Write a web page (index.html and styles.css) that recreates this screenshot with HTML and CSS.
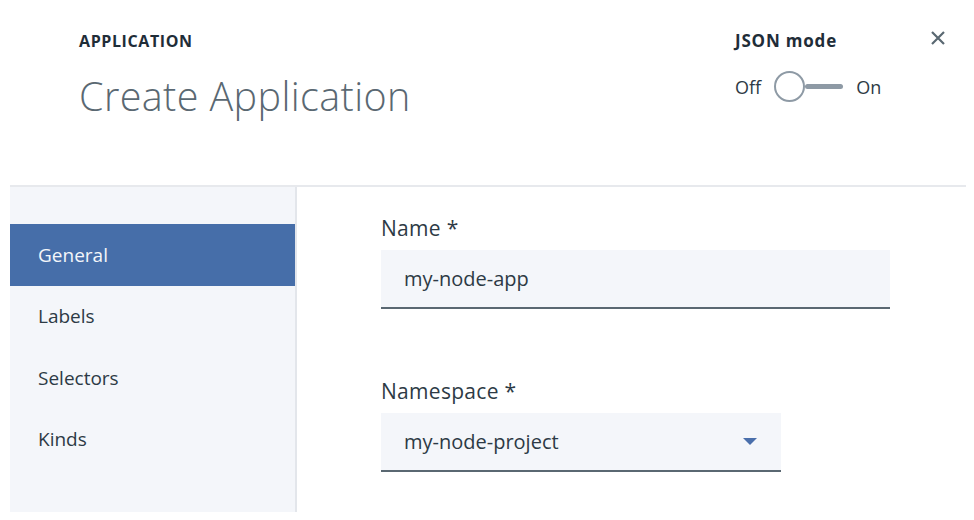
FILE: index.html
```html
<!DOCTYPE html>
<html lang="en">
<head>
<meta charset="utf-8">
<title>Create Application</title>
<link rel="stylesheet" href="styles.css">
</head>
<body>
<div class="modal">
  <header class="header">
    <div class="titles">
      <div class="eyebrow">APPLICATION</div>
      <h1 class="title">Create Application</h1>
    </div>
    <div class="json">
      <div class="json-label">JSON mode</div>
      <div class="toggle-row">
        <span class="toggle-text">Off</span>
        <span class="toggle">
          <span class="toggle-knob"></span>
          <span class="toggle-track"></span>
        </span>
        <span class="toggle-text">On</span>
      </div>
    </div>
    <button class="close" aria-label="Close">
      <svg width="16" height="16" viewBox="0 0 16 16"><path d="M2 2 L14 14 M14 2 L2 14" stroke="#5a6872" stroke-width="2.2" fill="none"/></svg>
    </button>
  </header>
  <section class="body">
    <nav class="sidebar">
      <a class="nav-item active">General</a>
      <a class="nav-item">Labels</a>
      <a class="nav-item">Selectors</a>
      <a class="nav-item">Kinds</a>
    </nav>
    <div class="form">
      <div class="field">
        <label class="field-label">Name *</label>
        <div class="input wide">my-node-app</div>
      </div>
      <div class="field">
        <label class="field-label">Namespace *</label>
        <div class="input select">
          <span>my-node-project</span>
          <svg class="caret" width="14" height="8" viewBox="0 0 14 8"><path d="M0 0 H14 L7 7 Z" fill="#4a6fab"/></svg>
        </div>
      </div>
    </div>
  </section>
</div>
</body>
</html>
```

FILE: styles.css
```css
* { box-sizing: border-box; }
html, body { margin: 0; padding: 0; background: #ffffff; }
body {
  font-family: "Open Sans", "Liberation Sans", sans-serif;
  color: #2d3a45;
  width: 974px;
  height: 520px;
  overflow: hidden;
}
.modal { display: flex; flex-direction: column; }

.header {
  display: flex;
  align-items: flex-start;
  height: 185px;
  padding: 30px 0 0 79px;
}
.titles { flex: 1; }
.eyebrow {
  font-size: 16px;
  font-weight: 700;
  line-height: 22px;
  letter-spacing: 0.6px;
  color: #1f2d38;
}
.title {
  margin: 19px 0 0;
  font-size: 39.5px;
  font-weight: 300;
  line-height: 50px;
  color: #5a6872;
  letter-spacing: 0.4px;
}
.json { width: 195px; }
.json-label {
  font-size: 17px;
  font-weight: 700;
  line-height: 22px;
  letter-spacing: 0.8px;
  color: #1f2d38;
}
.toggle-row {
  display: flex;
  align-items: center;
  gap: 13px;
  margin-top: 19px;
}
.toggle-text { font-size: 18px; color: #2d3a45; line-height: 24px; }
.toggle { display: flex; align-items: center; }
.toggle-knob {
  width: 31px; height: 31px;
  border: 2.5px solid #8e9aa5;
  border-radius: 50%;
  background: #fff;
}
.toggle-track {
  width: 38px; height: 5px;
  background: #8e9aa5;
  border-radius: 3px;
}
.close {
  margin: 0 28px 0 0;
  padding: 0;
  border: 0;
  background: none;
  width: 16px; height: 16px;
  display: flex;
}

.body {
  display: flex;
  margin-left: 10px;
  width: 956px;
  border-top: 2px solid #e7e9ed;
  height: 327px;
}
.sidebar {
  width: 287px;
  background: #f4f6fa;
  border-right: 2px solid #e3e6eb;
  padding-top: 37px;
  display: flex;
  flex-direction: column;
}
.nav-item {
  display: flex;
  align-items: center;
  height: 61.5px;
  padding-left: 28px;
  font-size: 19px;
  color: #2d3a45;
}
.nav-item.active { background: #466ea9; color: #f4f6fa; }

.form {
  flex: 1;
  padding: 27px 0 0 84px;
  display: flex;
  flex-direction: column;
  gap: 68px;
}
.field-label {
  display: block;
  font-size: 21px;
  line-height: 28px;
  letter-spacing: 0.3px;
  color: #2d3a45;
  margin-bottom: 8px;
}
.input {
  display: flex;
  align-items: center;
  height: 59px;
  padding: 0 24px 0 23px;
  background: #f4f6fa;
  border-bottom: 2px solid #5a6872;
  font-size: 20px;
  color: #2d3a45;
}
.input.wide { width: 509px; }
.input.select { width: 400px; justify-content: space-between; }
```
